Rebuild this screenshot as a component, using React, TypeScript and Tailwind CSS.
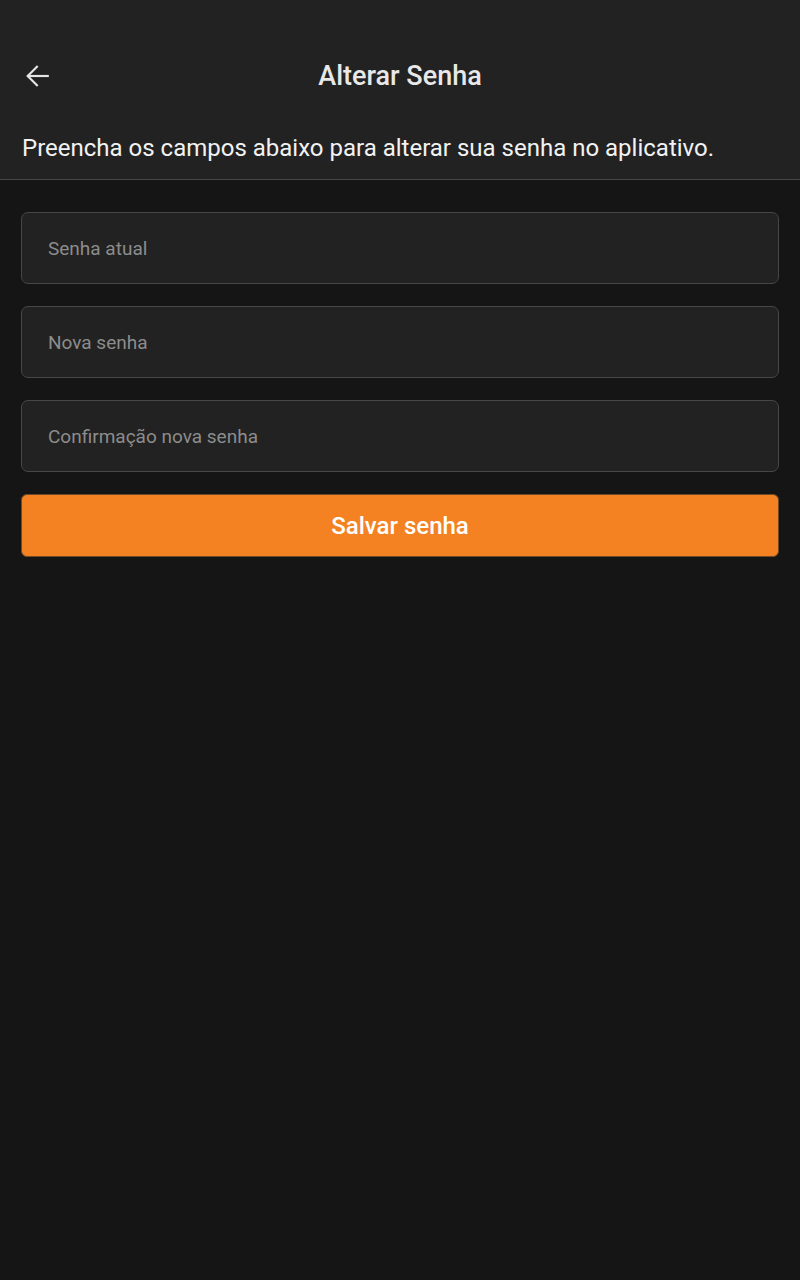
export default function App() {
  const font = { fontFamily: "Roboto, 'Noto Sans', sans-serif" };
  return (
    <div className="min-h-[1280px] w-full bg-[#151515]" style={font}>
      <div className="bg-[#222222] border-b border-[#474747] h-[180px] flex flex-col">
        <div className="relative flex items-center justify-center mt-[56px] h-[40px]">
          <button className="absolute left-[23px] top-[5px] w-[30px] h-[30px] flex items-center justify-center text-[#e6e6e6]">
            <svg width="26" height="26" viewBox="0 0 24 24" fill="none" stroke="currentColor" strokeWidth="2" strokeLinecap="square">
              <path d="M21 12H3" />
              <path d="M11 3.5L2.5 12L11 20.5" />
            </svg>
          </button>
          <h1 className="text-[27px] font-medium text-[#e8e8e8] leading-none">Alterar Senha</h1>
        </div>
        <div className="h-[32px]" />
        <p className="px-[22px] h-[40px] flex items-center text-[24px] leading-none text-[#f2f2f2]">
          Preencha os campos abaixo para alterar sua senha no aplicativo.
        </p>
      </div>
      <div className="px-[21px] pt-[32px] flex flex-col gap-[22px]">
        {["Senha atual", "Nova senha", "Confirmação nova senha"].map((p) => (
          <div key={p} className="h-[72px] rounded-[7px] border border-[#474747] bg-[#222222] flex items-center px-[26px] pt-[3px]">
            <span className="text-[19px] text-[#8c8c8c]">{p}</span>
          </div>
        ))}
        <button className="h-[63px] rounded-[6px] bg-[#f58222] border border-[#6e4a28] text-white text-[24px] font-medium flex items-center justify-center">
          Salvar senha
        </button>
      </div>
    </div>
  );
}
